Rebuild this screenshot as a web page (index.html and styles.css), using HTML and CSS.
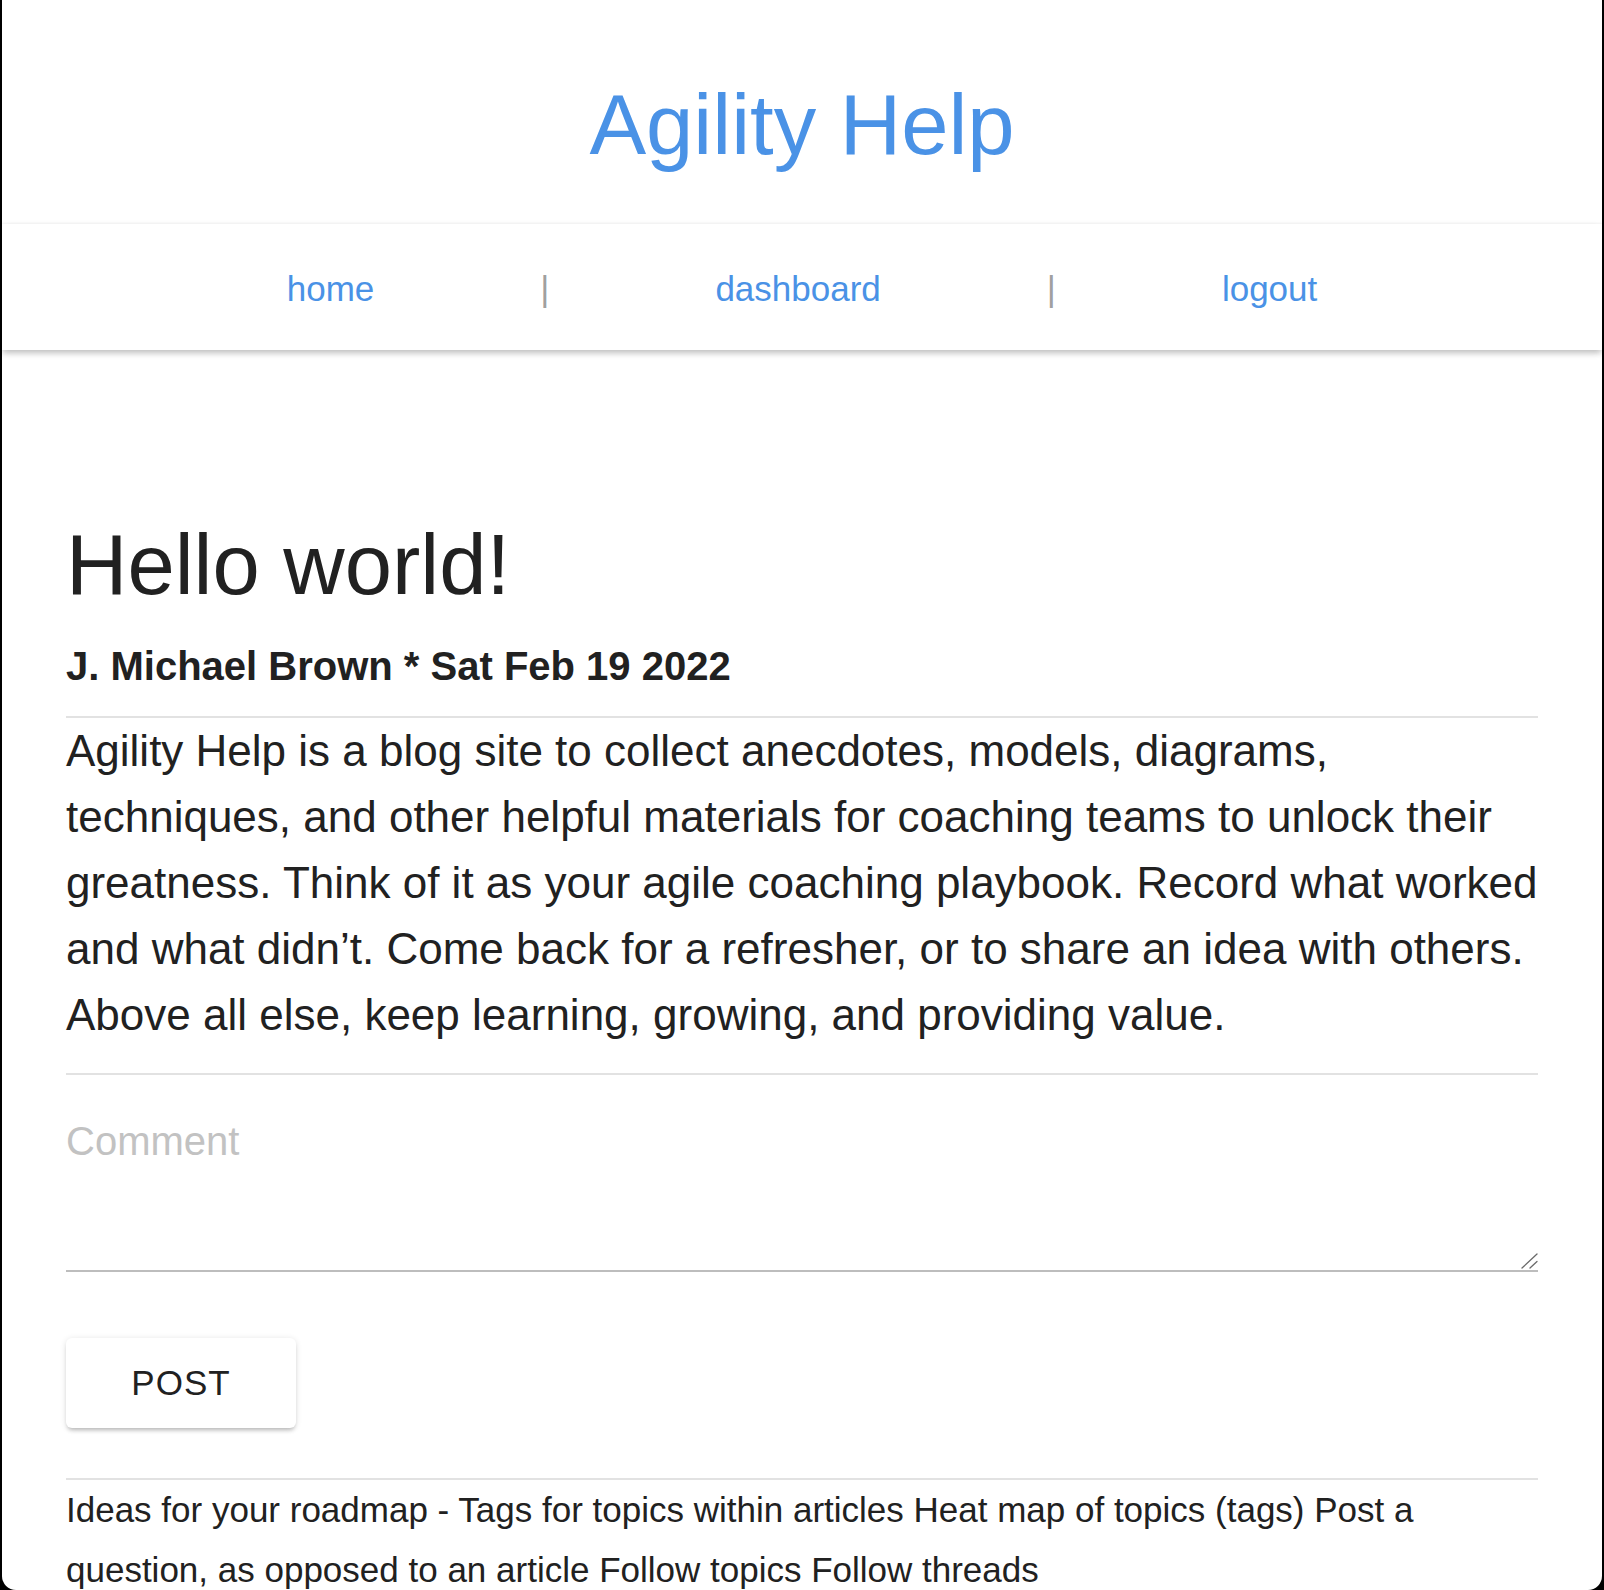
FILE: index.html
```html
<!DOCTYPE html>
<html lang="en">
<head>
<meta charset="utf-8">
<title>Agility Help</title>
<link rel="stylesheet" href="styles.css">
</head>
<body>
<div class="window">
  <header class="site-header">
    <h1 class="site-title">Agility Help</h1>
  </header>
  <nav class="nav">
    <a class="nav-link" href="#">home</a>
    <span class="nav-sep">|</span>
    <a class="nav-link" href="#">dashboard</a>
    <span class="nav-sep">|</span>
    <a class="nav-link" href="#">logout</a>
  </nav>
  <main class="content">
    <h2 class="post-title">Hello world!</h2>
    <div class="post-meta">J. Michael Brown * Sat Feb 19 2022</div>
    <hr class="divider divider-meta">
    <p class="post-body">Agility Help is a blog site to collect anecdotes, models, diagrams, techniques, and other helpful materials for coaching teams to unlock their greatness. Think of it as your agile coaching playbook. Record what worked and what didn’t. Come back for a refresher, or to share an idea with others. Above all else, keep learning, growing, and providing value.</p>
    <hr class="divider divider-body">
    <div class="comment-field">
      <textarea class="comment" placeholder="Comment"></textarea>
      <svg class="grip" width="17" height="16" viewBox="0 0 17 16" aria-hidden="true">
        <line x1="1" y1="15" x2="16" y2="1" />
        <line x1="9" y1="15" x2="16" y2="8.5" />
      </svg>
    </div>
    <button class="post-btn" type="button">POST</button>
    <hr class="divider divider-footer">
    <p class="roadmap">Ideas for your roadmap - Tags for topics within articles Heat map of topics (tags) Post a question, as opposed to an article Follow topics Follow threads</p>
  </main>
</div>
</body>
</html>
```
FILE: styles.css
```css
html, body {
  margin: 0;
  padding: 0;
  background: #000;
}

body {
  font-family: "Liberation Sans", Arial, Helvetica, sans-serif;
  color: #212121;
}

.window {
  margin: 0 2px;
  height: 1590px;
  background: #fff;
  border-radius: 0 0 14px 14px;
  overflow: hidden;
}

.site-header {
  box-sizing: border-box;
  height: 224px;
  padding-top: 75px;
  text-align: center;
}

.site-title {
  margin: 0;
  font-size: 85px;
  line-height: 100px;
  font-weight: 400;
  color: #4a92e6;
}

.nav {
  position: relative;
  box-sizing: border-box;
  height: 126px;
  padding-top: 4px;
  display: flex;
  justify-content: center;
  align-items: center;
  gap: 166px;
  font-size: 35px;
  background: #fff;
  box-shadow: 0 -1px 2px rgba(0, 0, 0, 0.04), 0 4px 6px -1px rgba(0, 0, 0, 0.22), 0 2px 8px rgba(0, 0, 0, 0.06);
}

.nav-link {
  color: #4a92e6;
  text-decoration: none;
}

.nav-sep {
  color: #a0a0a0;
}

.content {
  padding: 165px 64px 0 64px;
}

.post-title {
  margin: 0;
  font-size: 85px;
  line-height: 100px;
  font-weight: 400;
}

.post-meta {
  margin-top: 27px;
  font-size: 40px;
  line-height: 48px;
  font-weight: 700;
}

.divider {
  border: none;
  height: 2px;
  background: #e2e2e2;
  margin: 0;
}

.divider-meta {
  margin-top: 26px;
}

.post-body {
  margin: 0 -12px 0 0;
  font-size: 44px;
  line-height: 66px;
}

.divider-body {
  margin-top: 25px;
}

.comment-field {
  position: relative;
}

.comment {
  display: block;
  box-sizing: border-box;
  width: 100%;
  height: 197px;
  margin: 0;
  padding: 42px 0 8px 0;
  border: none;
  border-bottom: 2px solid #bdbdbd;
  font-family: "Liberation Sans", Arial, Helvetica, sans-serif;
  font-size: 40px;
  line-height: 48px;
  color: #212121;
  background: transparent;
  resize: none;
  outline: none;
}

.comment::placeholder {
  color: #c2c2c2;
  opacity: 1;
}

.grip {
  position: absolute;
  right: 0;
  bottom: 3px;
  stroke: #6a6a6a;
  stroke-width: 1.3;
  stroke-linecap: round;
}

.post-btn {
  display: block;
  margin-top: 66px;
  width: 230px;
  height: 90px;
  padding: 0;
  border: none;
  border-radius: 6px;
  background: #fff;
  color: #212121;
  font-family: "Liberation Sans", Arial, Helvetica, sans-serif;
  font-size: 35px;
  letter-spacing: 1px;
  box-shadow: 0 4px 4px -2px rgba(0, 0, 0, 0.22), 0 1px 6px rgba(0, 0, 0, 0.12);
}

.divider-footer {
  margin-top: 50px;
}

.roadmap {
  margin: 0;
  font-size: 35px;
  line-height: 60px;
}
```
